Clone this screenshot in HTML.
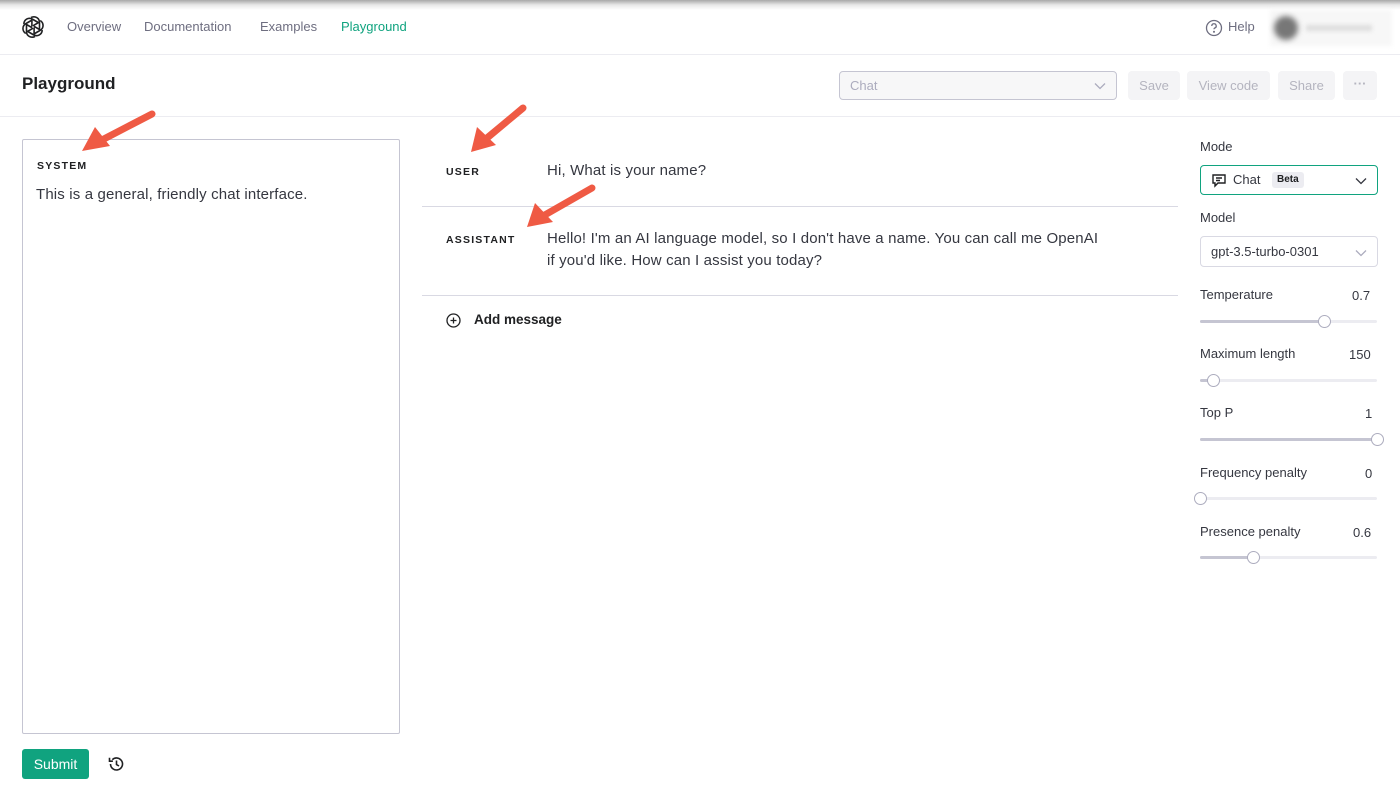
<!DOCTYPE html>
<html><head><meta charset="utf-8"><style>
*{box-sizing:border-box;margin:0;padding:0}
body{width:1400px;height:801px;background:#fff;font-family:"Liberation Sans",sans-serif;color:#202123;position:relative;overflow:hidden}
.a{position:absolute;white-space:nowrap}
.nav{font-size:13px;color:#6e6e80;top:19px}
.btn{position:absolute;top:71px;height:29px;background:#f4f4f6;border-radius:4px;color:#b4b4bf;font-size:13px;line-height:29px;text-align:center}
.lbl{font-size:10.5px;font-weight:bold;letter-spacing:1.2px;color:#202123}
.msg{font-size:15px;letter-spacing:0.15px;color:#353740;line-height:22px}
.rl{font-size:13px;color:#353740}
.track{position:absolute;left:1200px;width:177px;height:3px;background:#ececf1;border-radius:2px}
.fill{position:absolute;left:0;top:0;height:3px;background:#c5c5d2;border-radius:2px}
.knob{position:absolute;top:-5px;width:13px;height:13px;border-radius:50%;background:#fff;border:1.5px solid #acacbe;margin-left:-6px}
</style></head><body>
<div class="a" style="left:0;top:0;width:1400px;height:10px;background:linear-gradient(#a8a8a8,#e8e8e8 50%,#fff)"></div>
<svg class="a" style="left:21px;top:15px" width="24" height="24" viewBox="0 0 24 24" fill="none" stroke="#202123" stroke-width="1.6" stroke-linejoin="round">
<g transform="translate(12 12)">
<path id="p" d="M-2 -9.5 C2 -11.5 6.5 -9 6.5 -4.5 L6.5 2.5 L1 -0.7"/>
<use href="#p" transform="rotate(60)"/><use href="#p" transform="rotate(120)"/><use href="#p" transform="rotate(180)"/><use href="#p" transform="rotate(240)"/><use href="#p" transform="rotate(300)"/>
</g></svg>
<div class="a nav" style="left:67px">Overview</div>
<div class="a nav" style="left:144px">Documentation</div>
<div class="a nav" style="left:260px">Examples</div>
<div class="a nav" style="left:341px;color:#10a37f">Playground</div>
<svg class="a" style="left:1205px;top:19px" width="18" height="18" viewBox="0 0 18 18" fill="none" stroke="#6e6e80" stroke-width="1.3"><circle cx="9" cy="9" r="7.5"/><path d="M6.8 7a2.2 2.2 0 1 1 3 2c-.6.3-.8.7-.8 1.3"/><circle cx="9" cy="12.8" r=".4" fill="#6e6e80"/></svg>
<div class="a nav" style="left:1228px">Help</div>
<div class="a" style="left:1270px;top:10px;width:122px;height:36px;background:#f7f7f7;filter:blur(2px)"></div>
<div class="a" style="left:1274px;top:16px;width:24px;height:24px;border-radius:50%;background:#777;filter:blur(3px)"></div>
<div class="a" style="left:1306px;top:25px;width:66px;height:6px;background:#ddd;filter:blur(2px)"></div>
<div class="a" style="left:0;top:54px;width:1400px;height:1px;background:#ececf1"></div>
<div class="a" style="left:22px;top:74px;font-size:17px;font-weight:bold">Playground</div>
<div class="a" style="left:839px;top:71px;width:278px;height:29px;border:1px solid #c5c5d2;border-radius:4px;background:#f7f7f8;font-size:13px;color:#acacbe;line-height:27px;padding-left:10px">Chat
<svg style="position:absolute;right:10px;top:10px" width="12" height="8" viewBox="0 0 12 8" fill="none" stroke="#acacbe" stroke-width="1.3"><path d="M1 1.5l5 5 5-5"/></svg></div>
<div class="btn" style="left:1128px;width:52px">Save</div>
<div class="btn" style="left:1187px;width:83px">View code</div>
<div class="btn" style="left:1278px;width:57px">Share</div>
<div class="btn" style="left:1343px;width:34px;line-height:25px;font-weight:bold">···</div>
<div class="a" style="left:0;top:116px;width:1400px;height:1px;background:#ececf1"></div>

<div class="a" style="left:22px;top:139px;width:378px;height:595px;border:1px solid #c5c5d2;border-radius:2px"></div>
<div class="a lbl" style="left:37px;top:160px">SYSTEM</div>
<div class="a msg" style="left:36px;top:184px">This is a general, friendly chat interface.</div>
<div class="a" style="left:22px;top:749px;width:67px;height:30px;background:#10a37f;border-radius:3px;color:#fff;font-size:14px;line-height:30px;text-align:center">Submit</div>
<svg class="a" style="left:107px;top:755px" width="18" height="18" viewBox="0 0 18 18" fill="none" stroke="#202123" stroke-width="1.6"><path d="M3.5 9a6 6 0 1 0 1.8-4.3"/><path d="M2.5 2.8v3.4h3.4"/><path d="M9.5 5.5v4l2.5 1.5"/></svg>

<div class="a lbl" style="left:446px;top:166px">USER</div>
<div class="a msg" style="left:547px;top:160px">Hi, What is your name?</div>
<div class="a" style="left:422px;top:206px;width:756px;height:1px;background:#d9d9e3"></div>
<div class="a lbl" style="left:446px;top:234px">ASSISTANT</div>
<div class="a msg" style="left:547px;top:228px">Hello! I'm an AI language model, so I don't have a name. You can call me OpenAI<br>if you'd like. How can I assist you today?</div>
<div class="a" style="left:422px;top:295px;width:756px;height:1px;background:#d9d9e3"></div>
<svg class="a" style="left:446px;top:313px" width="15" height="15" viewBox="0 0 15 15" fill="none" stroke="#202123" stroke-width="1.3"><circle cx="7.5" cy="7.5" r="6.5"/><path d="M7.5 4.5v6M4.5 7.5h6"/></svg>
<div class="a" style="left:474px;top:312px;font-size:13.5px;font-weight:bold">Add message</div>

<div class="a rl" style="left:1200px;top:139px">Mode</div>
<div class="a" style="left:1200px;top:165px;width:178px;height:30px;border:1px solid #10a37f;border-radius:4px">
<svg style="position:absolute;left:10px;top:7px" width="16" height="15" viewBox="0 0 16 15" fill="none" stroke="#202123" stroke-width="1.4"><path d="M2 2h12v8H7l-3 3v-3H2z"/><path d="M5 5h6M5 7.5h4"/></svg>
<span style="position:absolute;left:32px;top:6px;font-size:13px;color:#353740">Chat</span>
<span style="position:absolute;left:71px;top:6px;height:16px;padding:0 5px;background:#ececf1;border-radius:3px;font-size:10px;font-weight:bold;line-height:16px">Beta</span>
<svg style="position:absolute;right:10px;top:11px" width="12" height="8" viewBox="0 0 12 8" fill="none" stroke="#353740" stroke-width="1.3"><path d="M1 1.5l5 5 5-5"/></svg></div>
<div class="a rl" style="left:1200px;top:210px">Model</div>
<div class="a" style="left:1200px;top:236px;width:178px;height:31px;border:1px solid #d9d9e3;border-radius:4px">
<span style="position:absolute;left:10px;top:7px;font-size:13px;color:#353740">gpt-3.5-turbo-0301</span>
<svg style="position:absolute;right:10px;top:12px" width="12" height="8" viewBox="0 0 12 8" fill="none" stroke="#acacbe" stroke-width="1.3"><path d="M1 1.5l5 5 5-5"/></svg></div>

<div class="a rl" style="left:1200px;top:287px">Temperature</div><div class="a rl" style="left:1352px;top:288px">0.7</div>
<div class="track" style="top:320px"><div class="fill" style="width:124px"></div><div class="knob" style="left:124px"></div></div>
<div class="a rl" style="left:1200px;top:346px">Maximum length</div><div class="a rl" style="left:1349px;top:347px">150</div>
<div class="track" style="top:379px"><div class="fill" style="width:13px"></div><div class="knob" style="left:13px"></div></div>
<div class="a rl" style="left:1200px;top:405px">Top P</div><div class="a rl" style="left:1365px;top:406px">1</div>
<div class="track" style="top:438px"><div class="fill" style="width:177px"></div><div class="knob" style="left:177px"></div></div>
<div class="a rl" style="left:1200px;top:465px">Frequency penalty</div><div class="a rl" style="left:1365px;top:466px">0</div>
<div class="track" style="top:497px"><div class="knob" style="left:0"></div></div>
<div class="a rl" style="left:1200px;top:524px">Presence penalty</div><div class="a rl" style="left:1353px;top:525px">0.6</div>
<div class="track" style="top:556px"><div class="fill" style="width:53px"></div><div class="knob" style="left:53px"></div></div>

<svg class="a" style="left:0;top:0" width="1400" height="801" fill="#ef5a44" stroke="#ef5a44">
<g stroke-width="7" stroke-linecap="round"><line x1="152" y1="114" x2="100" y2="141"/><line x1="523" y1="108" x2="487" y2="138"/><line x1="592" y1="188" x2="543" y2="216"/></g>
<g stroke="none"><polygon points="82,151 95,127 110,146"/><polygon points="471,152 477,127 496,145"/><polygon points="527,227 535,203 553,222"/></g>
</svg>
</body></html>
